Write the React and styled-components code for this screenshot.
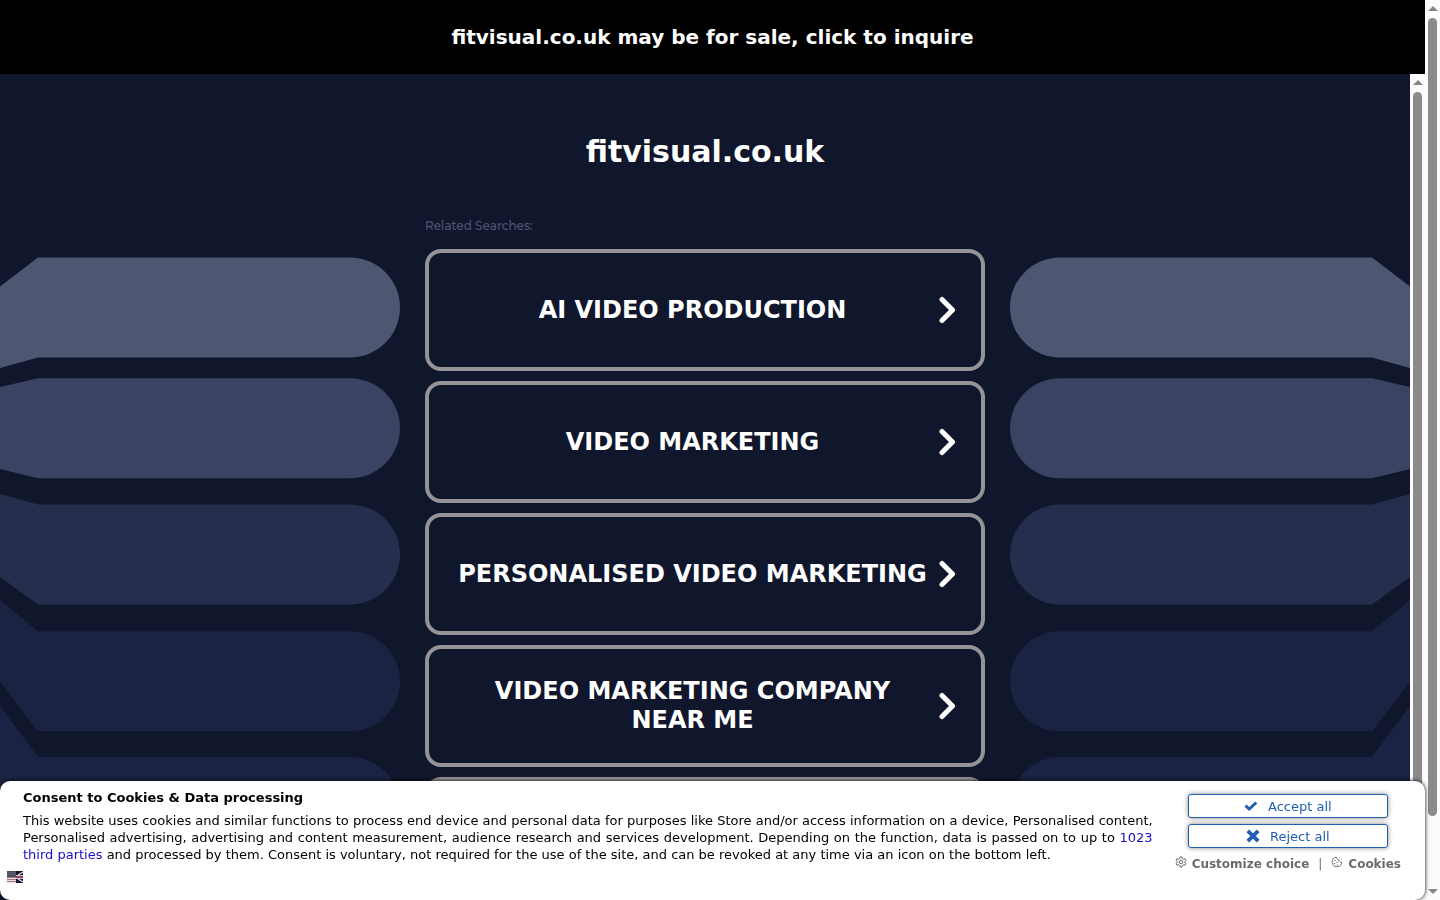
import React from 'react';
import styled, { createGlobalStyle } from 'styled-components';

const GlobalStyle = createGlobalStyle`
  * {
    box-sizing: border-box;
  }
  body {
    margin: 0;
    background: #10162b;
    font-family: "DejaVu Sans", sans-serif;
  }
`;

const Page = styled.div`
  display: flex;
  height: 100vh;
  overflow: hidden;
`;

const Main = styled.div`
  flex: 1;
  min-width: 0;
  display: flex;
  flex-direction: column;
`;

const SaleBanner = styled.a`
  flex: none;
  padding: 25px 0;
  background: #000;
  color: #fff;
  font-size: 20px;
  line-height: 24px;
  font-weight: bold;
  text-align: center;
  text-decoration: none;
`;

const Frame = styled.div`
  flex: 1;
  min-height: 0;
  display: flex;
`;

const Content = styled.div`
  flex: 1;
  min-width: 0;
  display: grid;
  grid-template-columns: 400px minmax(0, 1fr) 400px;
  overflow: hidden;
`;

const Art = styled.svg`
  width: 400px;
  height: 826px;
  transform: ${(props) => (props.$flip ? 'scaleX(-1)' : 'none')};
`;

const Center = styled.main`
  padding: 60px 25px 0;
`;

const DomainTitle = styled.h1`
  margin: 0;
  color: #fff;
  font-size: 30px;
  line-height: 36px;
  font-weight: bold;
  text-align: center;
`;

const RelatedLabel = styled.p`
  margin: 48px 0 15px;
  color: #4e5475;
  font-family: Montserrat, Inter, sans-serif;
  font-size: 12px;
  line-height: 16px;
  font-weight: 500;
`;

const SearchList = styled.nav`
  display: flex;
  flex-direction: column;
  gap: 10px;
`;

const SearchCard = styled.a`
  display: flex;
  align-items: center;
  min-height: 122px;
  padding: 0 25px;
  border: 4px solid #949498;
  border-radius: 16px;
  color: #fff;
  text-decoration: none;
`;

const SearchText = styled.span`
  flex: 1;
  font-size: 24px;
  line-height: 29px;
  font-weight: bold;
  text-align: center;
  text-transform: uppercase;
`;

const Chevron = styled.svg`
  flex: none;
  width: 25px;
  height: 28px;
`;

const ScrollTrack = styled.div`
  flex: none;
  display: flex;
  flex-direction: column;
  align-items: center;
  justify-content: space-between;
  width: 15px;
  padding: 6px 0;
  background: #fcfcfc;
`;

const ScrollArrow = styled.span`
  border: 5px solid transparent;
  border-top-width: ${(props) => (props.$down ? '5px' : '0')};
  border-bottom-width: ${(props) => (props.$down ? '0' : '5px')};
  border-top-color: ${(props) => (props.$down ? '#858585' : 'transparent')};
  border-bottom-color: ${(props) => (props.$down ? 'transparent' : '#858585')};
`;

const ScrollRail = styled.div`
  flex: 1;
  width: 9px;
  margin: 7px 0;
`;

const ScrollThumb = styled.div`
  height: ${(props) => props.$size};
  border-radius: 5px;
  background: #8b8b8b;
`;

const ConsentPanel = styled.section`
  position: fixed;
  left: 0;
  right: 15px;
  bottom: 0;
  display: flex;
  flex-wrap: wrap;
  min-height: 119px;
  padding: 8px 24px 0 23px;
  background: #fff;
  color: #000;
  border-radius: 10px;
  box-shadow: 0 0 4px #000;
  font-size: 13px;
  line-height: 17px;
`;

const ConsentCopy = styled.div`
  flex: 1;
  min-width: 0;
`;

const ConsentTitle = styled.h2`
  margin: 0 0 6px;
  font-size: 13px;
  line-height: 17px;
`;

const ConsentText = styled.p`
  margin: 0;
  text-align: justify;

  a {
    color: #1a0dc8;
    text-decoration: none;
  }
`;

const ConsentActions = styled.div`
  flex: none;
  display: flex;
  flex-direction: column;
  align-items: center;
  gap: 6px;
  margin-left: 22px;
  padding-top: 5px;
`;

const ConsentButton = styled.button`
  display: flex;
  align-items: center;
  justify-content: center;
  gap: 10px;
  width: 200px;
  height: 24px;
  padding: 0;
  border: 1px solid #225fb2;
  border-radius: 3px;
  background: #fff;
  color: #225fb2;
  box-shadow: 0 0 5px #888;
  font-family: inherit;
  font-size: 13px;
  cursor: pointer;
`;

const ConsentLinks = styled.div`
  display: flex;
  align-items: center;
  gap: 9px;
  color: #6b6b6b;
  font-size: 12px;
  line-height: 20px;
`;

const ConsentLink = styled.a`
  display: flex;
  align-items: flex-start;
  gap: 5px;
  color: #6b6b6b;
  font-weight: bold;
  text-decoration: none;

  svg {
    margin-top: 2px;
  }
`;

const LanguageButton = styled.button`
  position: absolute;
  left: 7px;
  bottom: 17px;
  display: flex;
  padding: 0;
  border: 0;
  background: none;
  cursor: pointer;
`;

const shapes = [
  { color: '#4e5771', d: 'M0 212.5L38 183.5H350A50 50 0 0 1 350 283.5H38L0 294Z' },
  { color: '#3a4362', d: 'M0 313L38 304.2H350A50 50 0 0 1 350 404.2H38L0 395Z' },
  { color: '#262e4d', d: 'M0 420L38 430.5H350A50 50 0 0 1 350 530.5H38L0 503Z' },
  { color: '#1b2342', d: 'M0 526L38 557.2H350A50 50 0 0 1 350 657.2H38L0 608Z' },
  { color: '#1a2343', d: 'M0 632L38 683H350A50 50 0 0 1 350 783H38L0 716Z' },
];

const searches = [
  'AI Video Production',
  'Video Marketing',
  'Personalised Video Marketing',
  'Video Marketing Company Near Me',
  '',
];

const SideArt = ({ flip }) => (
  <Art $flip={flip} viewBox="0 0 400 826" aria-hidden="true">
    {shapes.map((shape) => (
      <path key={shape.color} fill={shape.color} d={shape.d} />
    ))}
  </Art>
);

const ScrollBar = ({ size }) => (
  <ScrollTrack aria-hidden="true">
    <ScrollArrow />
    <ScrollRail>
      <ScrollThumb $size={size} />
    </ScrollRail>
    <ScrollArrow $down />
  </ScrollTrack>
);

const CheckIcon = () => (
  <svg width="14" height="10" viewBox="0 0 14 10" aria-hidden="true">
    <path d="M1.5 4.6L5.2 8L12.3 1.5" fill="none" stroke="currentColor" strokeWidth="3" />
  </svg>
);

const CrossIcon = () => (
  <svg width="14" height="14" viewBox="0 0 14 14" aria-hidden="true">
    <path d="M1.8 1.8L12.2 12.2M12.2 1.8L1.8 12.2" fill="none" stroke="currentColor" strokeWidth="3.8" />
  </svg>
);

const GearIcon = () => (
  <svg width="12" height="12" viewBox="0 0 24 24" fill="none" stroke="currentColor" strokeWidth="2" aria-hidden="true">
    <path d="M10 2h4l.7 3.2 2 1.2L20 5.4l2 3.5L19.5 11v2l2.5 2.1-2 3.5-3.3-1-2 1.2L14 22h-4l-.7-3.2-2-1.2-3.3 1-2-3.5L4.5 13v-2L2 8.9l2-3.5 3.3 1 2-1.2Z" />
    <circle cx="12" cy="12" r="3.6" />
  </svg>
);

const CookieIcon = () => (
  <svg width="12" height="12" viewBox="0 0 24 24" fill="none" stroke="currentColor" strokeWidth="1.8" aria-hidden="true">
    <path d="M11 2.5a9.5 9.5 0 1 0 10.5 10M11 2.5c0 2 1 3.5 3 3.5 0 3 1 4.5 3.5 4.5 1 1.5 2 2 4 2M16 3.5h1M20 7h1" />
    <path d="M8 8v2M7 14v2M12 12v2M13 17v2" strokeWidth="2.4" />
  </svg>
);

const FlagIcon = () => (
  <svg width="16" height="12" viewBox="0 0 16 12" aria-hidden="true">
    <rect width="9" height="12" fill="#e8dfe2" />
    <path d="M0 6.5H9M0 8.5H9M0 10.5H9" stroke="#ad7a82" />
    <rect width="9" height="6" fill="#4b4e60" />
    <path d="M0 1.5H9M0 3.5H9" stroke="#6c6e7c" strokeWidth="0.5" />
    <rect x="9" width="7" height="12" fill="#12122c" />
    <path d="M11 4L16 1M11 8L16 11" stroke="#e6dfe4" strokeWidth="1.3" />
    <path d="M9 6H16" stroke="#f3e8ec" strokeWidth="3.6" />
    <path d="M9 6H16" stroke="#7d2038" strokeWidth="1.6" />
  </svg>
);

const App = () => {
  return (
    <>
      <GlobalStyle />
      <Page>
        <Main>
          <SaleBanner href="#inquire">fitvisual.co.uk may be for sale, click to inquire</SaleBanner>
          <Frame>
            <Content>
              <SideArt />
              <Center>
                <DomainTitle>fitvisual.co.uk</DomainTitle>
                <RelatedLabel>Related Searches:</RelatedLabel>
                <SearchList>
                  {searches.map((search) => (
                    <SearchCard key={search} href="#search">
                      <SearchText>{search}</SearchText>
                      <Chevron viewBox="0 0 25 28" aria-hidden="true">
                        <path
                          d="M11 3.5L21.5 14L11 24.5"
                          fill="none"
                          stroke="#fff"
                          strokeWidth="5"
                          strokeLinecap="round"
                          strokeLinejoin="round"
                        />
                      </Chevron>
                    </SearchCard>
                  ))}
                </SearchList>
              </Center>
              <SideArt flip />
            </Content>
            <ScrollBar size="95%" />
          </Frame>
        </Main>
        <ScrollBar size="92.4%" />
      </Page>

      <ConsentPanel aria-labelledby="consent-title">
        <ConsentCopy>
          <ConsentTitle id="consent-title">Consent to Cookies &amp; Data processing</ConsentTitle>
          <ConsentText>
            This website uses cookies and similar functions to process end device and personal data for purposes like
            Store and/or access information on a device, Personalised content, Personalised advertising, advertising
            and content measurement, audience research and services development. Depending on the function, data is
            passed on to up to <a href="#vendors">1023 third parties</a> and processed by them. Consent is voluntary,
            not required for the use of the site, and can be revoked at any time via an icon on the bottom left.
          </ConsentText>
        </ConsentCopy>
        <ConsentActions>
          <ConsentButton type="button">
            <CheckIcon />
            Accept all
          </ConsentButton>
          <ConsentButton type="button">
            <CrossIcon />
            Reject all
          </ConsentButton>
          <ConsentLinks>
            <ConsentLink href="#customize">
              <GearIcon />
              Customize choice
            </ConsentLink>
            |
            <ConsentLink href="#cookies">
              <CookieIcon />
              Cookies
            </ConsentLink>
          </ConsentLinks>
        </ConsentActions>
        <LanguageButton type="button" aria-label="Language">
          <FlagIcon />
        </LanguageButton>
      </ConsentPanel>
    </>
  );
};

export default App;
